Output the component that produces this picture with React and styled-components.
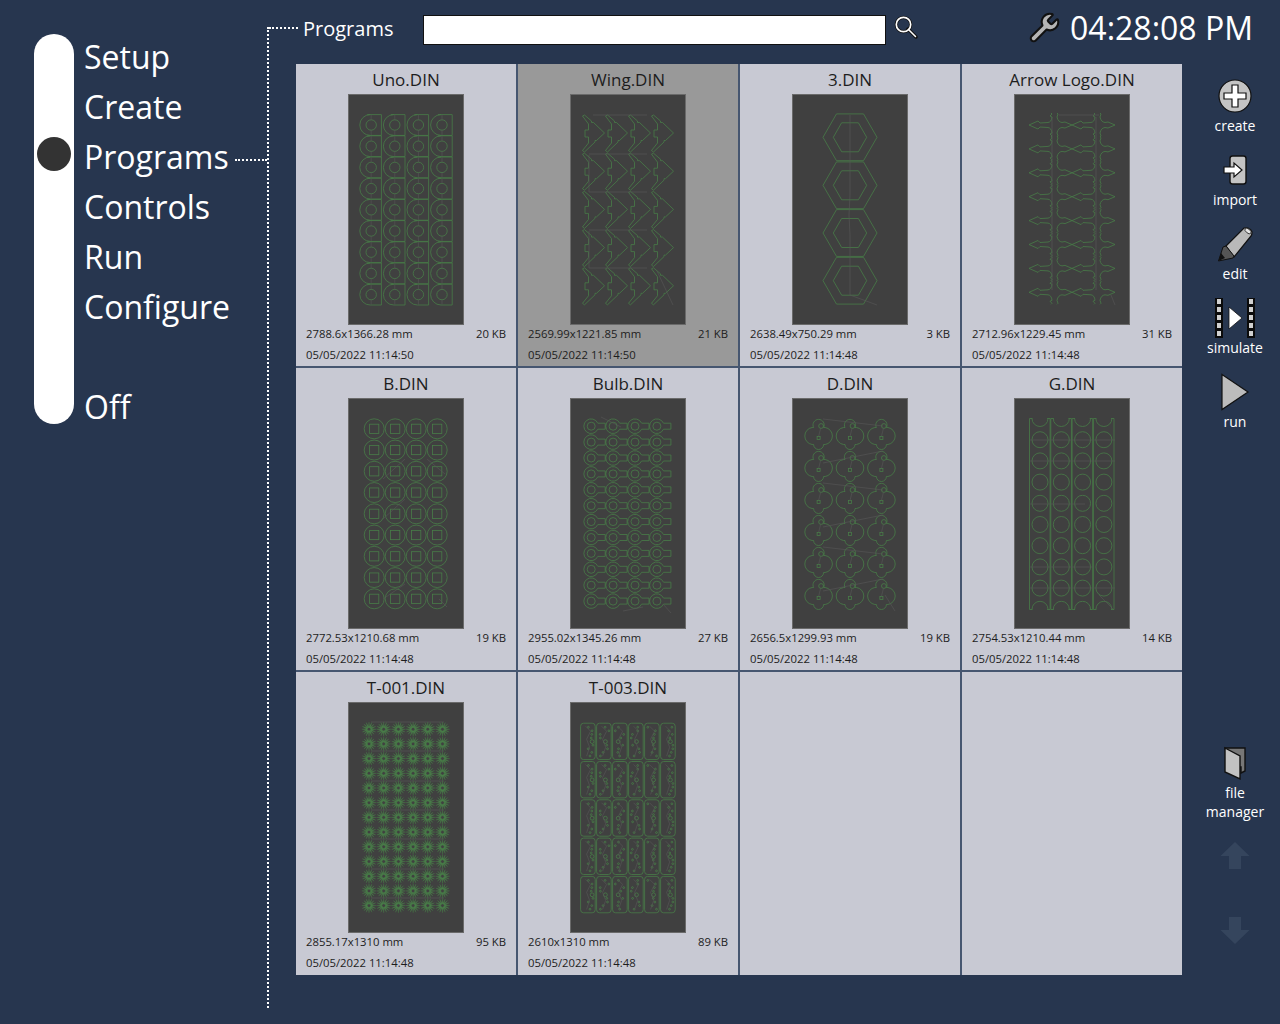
import React from "react"
import styled, { createGlobalStyle } from "styled-components"
import { Wrench } from "lucide-react"

const GlobalStyle = createGlobalStyle`
  html, body {
    margin: 0;
    padding: 0;
    background: #27364f;
    font-family: "Open Sans", "Noto Sans", sans-serif;
    color: #fff;
    overflow: hidden;
  }
`

const Page = styled.div`
  display: flex;
  width: 1280px;
  height: 1024px;
`

const Sidebar = styled.nav`
  display: flex;
  width: 267px;
  padding: 29px 0 0 34px;
  box-sizing: border-box;
`

const Rail = styled.div`
  width: 40px;
  height: 390px;
  margin-top: 5px;
  padding: ${p => 3 + p.$active * 50}px 3px 0;
  box-sizing: border-box;
  background: #fff;
  border-radius: 20px;
`

const RailDot = styled.div`
  width: 34px;
  height: 34px;
  border-radius: 50%;
  background: #333;
`

const Menu = styled.ul`
  flex: 1;
  margin: 0;
  padding: 3px 0 0 10px;
  list-style: none;
`

const MenuItem = styled.li`
  display: flex;
  align-items: center;
  height: 50px;
  font-size: 32px;
  line-height: 50px;
  white-space: nowrap;
`

const Branch = styled.span`
  flex: 1;
  margin: 6px 0 0 6px;
  border-top: 2px dotted #fff;
`

const Trunk = styled.div`
  width: 0;
  height: 981px;
  margin-top: 27px;
  border-left: 2px dotted #fff;
`

const Content = styled.main`
  flex: 1;
  display: flex;
  flex-direction: column;
`

const Header = styled.header`
  display: flex;
  align-items: center;
  height: 60px;
  margin-bottom: 4px;
`

const HeaderDash = styled.span`
  width: 29px;
  margin-bottom: 5px;
  border-top: 2px dotted #fff;
`

const HeaderTitle = styled.h1`
  width: 120px;
  margin: 0 0 2px 5px;
  font-size: 20px;
  font-weight: 400;
  line-height: 28px;
`

const SearchBox = styled.input`
  width: 463px;
  height: 30px;
  box-sizing: border-box;
  background: #fff;
  border: 1px solid #111;
  outline: none;
`

const SearchIcon = styled.svg`
  width: 24px;
  height: 24px;
  margin: 0 0 6px 8px;
`

const Spacer = styled.div`
  flex: 1;
`

const SettingsIcon = styled(Wrench)`
  width: 33px;
  height: 33px;
  margin: 0 9px 6px 0;
  fill: #b5b5b5;
  stroke: #111;
`

const Clock = styled.div`
  margin: 0 27px 4px 0;
  font-size: 32px;
  line-height: 44px;
  white-space: nowrap;
`

const Body = styled.div`
  display: flex;
  align-items: flex-start;
`

const Grid = styled.section`
  display: grid;
  grid-template-columns: repeat(4, 220px);
  grid-template-rows: 302px 302px 303px;
  gap: 2px;
  margin-left: 27px;
  background: #465670;
`

const Cell = styled.article`
  display: flex;
  flex-direction: column;
  background: ${p => (p.$selected ? "#999999" : "#c8c9d3")};
  color: #1d1d1d;
`

const CellTitle = styled.div`
  height: 30px;
  padding-top: 6px;
  box-sizing: border-box;
  font-size: 17px;
  line-height: 20px;
  text-align: center;
`

const Thumb = styled.div`
  align-self: center;
  width: 116px;
  height: 231px;
  box-sizing: border-box;
  background: #404040;
  border: 1px solid #6a6a6a;
`

const Art = styled.svg`
  display: block;
  width: 114px;
  height: 229px;
  fill: none;
  stroke: #487c48;
  stroke-width: 0.8;
`

const Meta = styled.div`
  display: flex;
  justify-content: space-between;
  padding: 0 10px;
  font-size: 11.3px;
  line-height: 21px;
`

const MetaGroup = styled.div`
  margin-top: -2px;
`

const Toolbar = styled.aside`
  display: flex;
  flex-direction: column;
  width: 90px;
  margin-left: 8px;
  padding-top: 10px;
`

const Tool = styled.div`
  display: flex;
  flex-direction: column;
  align-items: center;
  height: ${p => p.$height || 74}px;
  margin-top: ${p => p.$offset || 0}px;
`

const ToolIcon = styled.svg`
  display: block;
  width: 40px;
  height: 44px;
  flex: none;
`

const ToolLabel = styled.div`
  margin-top: -2px;
  font-size: 14px;
  line-height: 19px;
  text-align: center;
  white-space: pre-line;
`

const range = n => Array.from({ length: n }, (_, i) => i)

// small repeatable random, the stray dots and travel lines have no real pattern
const noise = seed => {
  const x = Math.sin(seed * 91.17) * 43758.5453
  return x - Math.floor(x)
}

const Travel = ({ d }) => <path d={d} stroke="#585858" strokeWidth="0.6" />

const UnoArt = () => (
  <>
    {range(9).map(r =>
      range(4).map(c => {
        const x = 22.2 + c * 23.6
        const y = 30 + r * 21.2
        return (
          <g key={`${r}-${c}`} transform={`translate(${x} ${y})`}>
            <path d="M-4 -10.4 H10.2 V10.4 H-1 A10.4 10.4 0 0 1 -1 -10.4" />
            <circle r="5.2" />
            <Travel d="M0 -10 V-5 M0 5 V10" />
          </g>
        )
      })
    )}
  </>
)

const WingArt = () => (
  <>
    {range(5).map(r =>
      range(4).map(c => (
        <path
          key={`${r}-${c}`}
          transform={`translate(${11.5 + c * 23} ${20 + r * 38.2})`}
          d="M0 1 L2 0 L9 6 L9 7.5 L11 7.5 L22 18 L14 25.5 L12.5 25.5 L12.5 27 L2 37 L0 35.5 L6 28 L6 22 L2.5 22 L2.5 15 L6 15 L6 9 Z"
        />
      ))
    )}
    <Travel d="M22 20 H76 M18 59 H76 M18 97 H76 M18 135 H76 M18 173 H76 M86 176 L102 210 M18 60 V97 M18 136 V173" />
  </>
)

const hexagon = radius =>
  range(6)
    .map(i => {
      const a = (i * Math.PI) / 3
      return `${(Math.cos(a) * radius).toFixed(1)},${(Math.sin(a) * radius).toFixed(1)}`
    })
    .join(" ")

const HexArt = () => (
  <>
    {[42.3, 90.3, 138, 185.7].map(y => (
      <g key={y} transform={`translate(57 ${y})`}>
        <polygon points={hexagon(27)} />
        <polygon points={hexagon(16.7)} />
      </g>
    ))}
    <Travel d="M57 20 V100 L56 120 L57 140 V200 L84 210" />
  </>
)

const ArrowArt = () => (
  <>
    {range(8).map(r =>
      range(2).map(c => (
        <g key={`${r}-${c}`} transform={`translate(${c * 43} ${30 + r * 23.9})`}>
          <path d="M14 0 L23 -4 L25 -2 L33 -2.5 Q36.5 -3 37 -8 L35 -9 L37 -11 L36 -12 M42 -12 L43 -11 L42 -8 Q43 -3 47 -2.5 L50 -3 L57 0 L50 3 L47 2.5 Q43 3 42 8 L43 11 L42 12 M36 12 L37 11 L35 9 L37 8 Q36.5 3 33 2.5 L25 2 L23 4 L14 0" />
        </g>
      ))
    )}
    <Travel d="M37 22 V195 M81 22 V195 M44 20 H84 M96 200 L100 210" />
  </>
)

const CircleSquareArt = () => (
  <>
    {range(9).map(r =>
      range(4).map(c => (
        <g key={`${r}-${c}`} transform={`translate(${25.2 + c * 21} ${29.8 + r * 21.25})`}>
          <circle r="10" />
          <rect x="-4.6" y="-4.6" width="9.2" height="9.2" />
        </g>
      ))
    )}
    <Travel d="M34 120 L56 100 M34 80 L56 60 M78 60 L96 75 M34 200 L56 185 M90 200 L98 208" />
  </>
)

const BulbArt = () => (
  <>
    {range(12).map(r =>
      range(4).map(c => (
        <g key={`${r}-${c}`} transform={`translate(${20.2 + c * 21.9} ${27.2 + r * 15.9})`}>
          <path d="M6.6 -3 A7.3 7.3 0 1 0 6.6 3 H14 V-3 Z" />
          <circle r="4" />
        </g>
      ))
    )}
    <Travel d="M30 18 L50 28 M52 212 L72 208 M92 205 L100 214" />
  </>
)

const CloverArt = () => (
  <>
    {range(6).map(r =>
      range(3).map(c => (
        <g key={`${r}-${c}`} transform={`translate(${25.6 + c * 31.4} ${19.5 + r * 32})`}>
          <path d="M-5 9 A5.6 5.6 0 1 1 5 9 L6.5 9 A8.6 8.6 0 0 1 6.5 26 L5 26 A5 5 0 0 1 -5 26 L-6.5 26 A8.6 8.6 0 0 1 -6.5 9 Z" />
          <circle cx="2.5" cy="7.5" r="2.4" />
          <rect x="-1.5" y="18" width="3" height="3" />
          <Travel d="M2 10 L0 18" />
        </g>
      ))
    )}
    <Travel d="M30 20 L90 27 M30 64 L60 58 L90 52 M30 84 L90 91 M30 128 L90 116 M30 148 L90 155 M30 192 L90 180 M92 196 L102 212" />
  </>
)

const SlotArt = () => (
  <>
    <defs>
      <clipPath id="slot-clip">
        <rect x="14" y="19.5" width="86" height="191" />
      </clipPath>
    </defs>
    <g clipPath="url(#slot-clip)">
      {range(4).map(c =>
        range(10).map(r => (
          <circle key={`${r}-${c}`} cx={25 + c * 21.3} cy={19.5 + r * 21.2} r="8" />
        ))
      )}
    </g>
    {range(4).map(c => {
      const x = 14.5 + c * 21.3
      return (
        <path
          key={c}
          d={`M${x + 3} 19.5 H${x} V210.5 H${x + 3} M${x + 17.6} 19.5 H${x + 20.6} V210.5 H${x + 17.6}`}
        />
      )
    })}
    <Travel d="M15 41 H100 M15 62 H100 M15 105 H70 M15 168 H78 M15 189 H100 M84 196 L98 210" />
  </>
)

const starPoints = range(32)
  .map(i => {
    const a = (i * Math.PI) / 16
    const radius = i % 2 ? 2.8 : 7.2
    return `${(Math.cos(a) * radius).toFixed(1)},${(Math.sin(a) * radius).toFixed(1)}`
  })
  .join(" ")

const StarArt = () => (
  <>
    <Travel d="M22 19 H95 M22 48 H95 M22 78 H95 M22 107 H95 M22 136 H95 M22 166 H95 M22 195 H95" />
    {range(13).map(r =>
      range(6).map(c => (
        <g key={`${r}-${c}`} transform={`translate(${20 + c * 14.7} ${26.2 + r * 14.7})`}>
          <polygon points={starPoints} fill="#487c48" strokeWidth="0.3" />
          <circle r="1.8" fill="#404040" strokeWidth="0.6" />
        </g>
      ))
    )}
  </>
)

const CardArt = () => (
  <>
    {range(5).map(r =>
      range(6).map(c => (
        <g key={`${r}-${c}`} transform={`translate(${9.6 + c * 16} ${20.2 + r * 38.3})`}>
          <rect width="14.6" height="36.4" rx="3" />
          {range(9).map(i => (
            <circle
              key={i}
              cx={(2.5 + noise(i * 1.7 + c * 0.3 + 1) * 10).toFixed(1)}
              cy={(4 + i * 3.6).toFixed(1)}
              r={i === 4 ? 1.9 : 0.9}
            />
          ))}
          <Travel d="M5 3 L10 8 L6 16 L9 24 L6 33" />
        </g>
      ))
    )}
  </>
)

const ART = {
  uno: UnoArt,
  wing: WingArt,
  hex: HexArt,
  arrow: ArrowArt,
  circleSquare: CircleSquareArt,
  bulb: BulbArt,
  clover: CloverArt,
  slot: SlotArt,
  star: StarArt,
  card: CardArt,
}

const programs = [
  { name: "Uno.DIN", size: "2788.6x1366.28 mm", kb: "20 KB", date: "05/05/2022 11:14:50", art: "uno" },
  { name: "Wing.DIN", size: "2569.99x1221.85 mm", kb: "21 KB", date: "05/05/2022 11:14:50", art: "wing", selected: true },
  { name: "3.DIN", size: "2638.49x750.29 mm", kb: "3 KB", date: "05/05/2022 11:14:48", art: "hex" },
  { name: "Arrow Logo.DIN", size: "2712.96x1229.45 mm", kb: "31 KB", date: "05/05/2022 11:14:48", art: "arrow" },
  { name: "B.DIN", size: "2772.53x1210.68 mm", kb: "19 KB", date: "05/05/2022 11:14:48", art: "circleSquare" },
  { name: "Bulb.DIN", size: "2955.02x1345.26 mm", kb: "27 KB", date: "05/05/2022 11:14:48", art: "bulb" },
  { name: "D.DIN", size: "2656.5x1299.93 mm", kb: "19 KB", date: "05/05/2022 11:14:48", art: "clover" },
  { name: "G.DIN", size: "2754.53x1210.44 mm", kb: "14 KB", date: "05/05/2022 11:14:48", art: "slot" },
  { name: "T-001.DIN", size: "2855.17x1310 mm", kb: "95 KB", date: "05/05/2022 11:14:48", art: "star" },
  { name: "T-003.DIN", size: "2610x1310 mm", kb: "89 KB", date: "05/05/2022 11:14:48", art: "card" },
]

const menu = ["Setup", "Create", "Programs", "Controls", "Run", "Configure", "", "Off"]

const ProgramCell = ({ program }) => {
  const Drawing = ART[program.art]
  return (
    <Cell $selected={program.selected}>
      <CellTitle>{program.name}</CellTitle>
      <Thumb>
        <Art viewBox="0 0 114 229">
          <Drawing />
        </Art>
      </Thumb>
      <MetaGroup>
        <Meta>
          <span>{program.size}</span>
          <span>{program.kb}</span>
        </Meta>
        <Meta>
          <span>{program.date}</span>
        </Meta>
      </MetaGroup>
    </Cell>
  )
}

const App = () => (
  <Page>
    <GlobalStyle />
    <Sidebar>
      <Rail $active={2}>
        <RailDot />
      </Rail>
      <Menu>
        {menu.map((item, i) => (
          <MenuItem key={i}>
            {item}
            {item === "Programs" && <Branch />}
          </MenuItem>
        ))}
      </Menu>
    </Sidebar>
    <Trunk />
    <Content>
      <Header>
        <HeaderDash />
        <HeaderTitle>Programs</HeaderTitle>
        <SearchBox />
        <SearchIcon viewBox="0 0 24 24" fill="none">
          <path d="M14 14 L22 22" stroke="#111" strokeWidth="3.4" strokeLinecap="round" />
          <circle cx="9.5" cy="9.5" r="7.2" stroke="#111" strokeWidth="3.2" />
          <circle cx="9.5" cy="9.5" r="7.2" stroke="#fff" strokeWidth="1.7" />
          <path d="M15 15 L21.5 21.5" stroke="#fff" strokeWidth="1.5" strokeLinecap="round" />
        </SearchIcon>
        <Spacer />
        <SettingsIcon strokeWidth={1.5} />
        <Clock>04:28:08 PM</Clock>
      </Header>
      <Body>
        <Grid>
          {programs.map(program => (
            <ProgramCell key={program.name} program={program} />
          ))}
          <Cell />
          <Cell />
        </Grid>
        <Toolbar>
          <Tool>
            <ToolIcon viewBox="0 0 40 44">
              <circle cx="20" cy="22" r="16" fill="#c4c4c4" stroke="#111" strokeWidth="1.2" />
              <path d="M17 11 H23 V19 H31 V25 H23 V33 H17 V25 H9 V19 H17 Z" fill="#fff" stroke="#111" strokeWidth="1.2" />
            </ToolIcon>
            <ToolLabel>create</ToolLabel>
          </Tool>
          <Tool>
            <ToolIcon viewBox="0 0 40 44">
              <rect x="15" y="8" width="16" height="28" rx="2.5" fill="#c4c4c4" stroke="#111" strokeWidth="1.4" />
              <path d="M9 19 H19 V15 L27 22 L19 29 V25 H9 Z" fill="#fff" stroke="#111" strokeWidth="1.2" />
            </ToolIcon>
            <ToolLabel>import</ToolLabel>
          </Tool>
          <Tool>
            <ToolIcon viewBox="0 0 40 44">
              <path d="M11 24 L29 6 Q35 5 37 10 Q37 13 36 14 L19 35 Z" fill="#b9b9b9" stroke="#111" strokeWidth="1.2" />
              <ellipse cx="33" cy="9" rx="3.6" ry="2" transform="rotate(40 33 9)" fill="#e4e4e4" stroke="#222" strokeWidth="0.8" />
              <path d="M3.5 39 L8 25 L11 24 L19 34 L18 36 Z" fill="#555" stroke="#111" strokeWidth="1" />
              <path d="M3.5 39 L6 31 L10 36 Z" fill="#111" />
            </ToolIcon>
            <ToolLabel>edit</ToolLabel>
          </Tool>
          <Tool>
            <ToolIcon viewBox="0 0 40 44">
              <rect x="0" y="2" width="8" height="40" fill="#0b0b0b" />
              <rect x="32" y="2" width="8" height="40" fill="#0b0b0b" />
              {[3, 11, 19, 27, 35].map(y => (
                <React.Fragment key={y}>
                  <rect x="2" y={y} width="4" height="5" fill="#d0d0d0" />
                  <rect x="34" y={y} width="4" height="5" fill="#d0d0d0" />
                </React.Fragment>
              ))}
              <path d="M14 11 L27 22 L14 33 Z" fill="#fff" stroke="#111" strokeWidth="0.8" />
            </ToolIcon>
            <ToolLabel>simulate</ToolLabel>
          </Tool>
          <Tool>
            <ToolIcon viewBox="0 0 40 44">
              <path d="M7 4.5 L33 22 L7 39.5 Z" fill="#bcbcbc" stroke="#111" strokeWidth="1.2" />
            </ToolIcon>
            <ToolLabel>run</ToolLabel>
          </Tool>
          <Tool $offset={297} $height={93}>
            <ToolIcon viewBox="0 0 40 44">
              <path d="M10 7 H30 V30 L26 32 V26 H14 Z" fill="#777" stroke="#111" strokeWidth="1.4" />
              <path d="M10 7 L25 15 V38 L10 31 Z" fill="#c2c2c2" stroke="#111" strokeWidth="1.4" />
            </ToolIcon>
            <ToolLabel>{"file\nmanager"}</ToolLabel>
          </Tool>
          <Tool>
            <ToolIcon viewBox="0 0 40 44">
              <path d="M20 8 L34.5 22 H26 V35 H14 V22 H5.5 Z" fill="#35455d" />
            </ToolIcon>
          </Tool>
          <Tool>
            <ToolIcon viewBox="0 0 40 44">
              <path d="M20 36 L34.5 22 H26 V9 H14 V22 H5.5 Z" fill="#35455d" />
            </ToolIcon>
          </Tool>
        </Toolbar>
      </Body>
    </Content>
  </Page>
)

export default App
